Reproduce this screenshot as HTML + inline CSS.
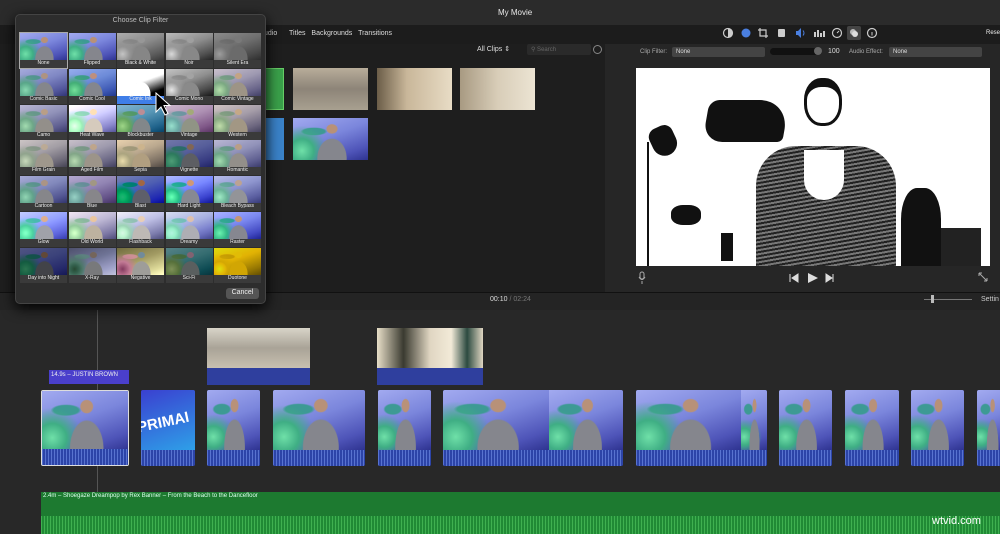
<!DOCTYPE html>
<html><head><meta charset="utf-8"><style>
*{box-sizing:border-box;margin:0;padding:0}
body{width:1000px;height:534px;background:#1f1f1f;position:relative;overflow:hidden;font-family:"Liberation Sans",sans-serif;color:#ddd;font-size:7px}
.a{position:absolute}
.t{position:absolute;background:
radial-gradient(ellipse 8% 12% at 52% 26%,#b89178 85%,transparent 100%),
radial-gradient(ellipse 20% 48% at 52% 96%,#85868d 95%,transparent 100%),
radial-gradient(circle at 12% 78%,#6fe0a8 0,#3fae84 16%,transparent 34%),
radial-gradient(ellipse 18% 10% at 28% 32%,#3d9a94 80%,transparent 100%),
linear-gradient(160deg,#a2aaf0,#7b86dc 45%,#4e54b8 80%,#2e3390);}
.lb{position:absolute;font-size:5px;color:#eee;text-align:center;background:#3a3a3a}
.clip{position:absolute;top:390px;height:76px;border-radius:2px;overflow:hidden;background:#2f3f9e}
.clip .t{left:0;right:0;top:0;height:60px}
.clip .w{position:absolute;left:0;right:0;bottom:0;height:16px;background:repeating-linear-gradient(90deg,#5873d0 0 1px,#2c44a8 1px 3px)}
</style></head><body>
<div class="a" style="left:0;top:0;width:1000px;height:25px;background:#2b2b2b"></div>
<div class="a" style="left:498px;top:8px;font-size:8px;color:#e8e8e8">My Movie</div>
<div class="a" style="left:0;top:25px;width:1000px;height:19px;background:#1c1c1c"></div>
<div class="a" style="left:264px;top:30px;font-size:7px;color:#ddd;word-spacing:4px">udio&nbsp; Titles Backgrounds Transitions</div>
<div class="a" style="left:0;top:44px;width:605px;height:248px;background:#1e1e1e"></div>
<div class="a" style="left:477px;top:45px;font-size:7px;color:#ddd">All Clips ⇕</div>
<div class="a" style="left:527px;top:44px;width:64px;height:11px;background:#2a2a2a;border-radius:2px;font-size:6px;color:#666;padding:2px 4px">⚲ Search</div>
<div class="a" style="left:593px;top:45px;width:9px;height:9px;border:1px solid #888;border-radius:50%"></div>
<div class="a" style="left:265px;top:68px;width:19px;height:42px;background:#3aa04a;border:1px solid #6c6"></div>
<div class="a" style="left:293px;top:68px;width:75px;height:42px;background:linear-gradient(#b8ad9a,#8d8478 50%,#a8a090)"></div>
<div class="a" style="left:377px;top:68px;width:75px;height:42px;background:linear-gradient(90deg,#6b5d48,#c9b79a 40%,#e8dcc5)"></div>
<div class="a" style="left:460px;top:68px;width:75px;height:42px;background:linear-gradient(90deg,#a89a82,#d8cdb8 50%,#ece4d3)"></div>
<div class="a" style="left:265px;top:118px;width:19px;height:42px;background:#3a82c8"></div>
<div class="t" style="left:293px;top:118px;width:75px;height:42px"></div>
<div class="a" style="left:605px;top:44px;width:395px;height:248px;background:#262626"></div>
<svg class="a" style="left:720px;top:26px" width="160" height="14" viewBox="0 0 160 14">
<circle cx="8" cy="7" r="4.5" fill="none" stroke="#ccc" stroke-width="1.2"/><path d="M8 2.5a4.5 4.5 0 0 1 0 9z" fill="#ccc"/>
<circle cx="26" cy="7" r="4.5" fill="#4a7fe0"/>
<path d="M40 2v8h8M38 4h8v8" fill="none" stroke="#ccc" stroke-width="1.2"/>
<rect x="58" y="3" width="7" height="8" fill="#ccc" rx="1"/>
<path d="M76 5h2l3-3v10l-3-3h-2z" fill="#4a7fe0"/><path d="M83 4.5q2 2.5 0 5" stroke="#4a7fe0" fill="none"/>
<path d="M94 11V6h2v5zM97 11V4h2v7zM100 11V7h2v4zM103 11V5h2v6z" fill="#ccc"/>
<circle cx="117" cy="7" r="4.5" fill="none" stroke="#ccc" stroke-width="1.2"/><path d="M117 7l2-2" stroke="#ccc"/>
<rect x="127" y="0" width="14" height="14" fill="#444" rx="2"/><circle cx="133" cy="6" r="3" fill="#bbb"/><circle cx="135" cy="8" r="3" fill="#ddd"/>
<circle cx="152" cy="7" r="4.5" fill="none" stroke="#ccc" stroke-width="1.2"/><path d="M152 6v3.5" stroke="#ccc"/>
</svg>
<div class="a" style="left:986px;top:30px;font-size:6px;color:#eee">Rese</div>
<div class="a" style="left:640px;top:49px;font-size:6px;color:#aaa">Clip Filter:</div>
<div class="a" style="left:672px;top:47px;width:93px;height:10px;background:#444;border-radius:2px;font-size:6px;color:#ddd;padding:2px 4px">None</div>
<div class="a" style="left:770px;top:48px;width:52px;height:7px;background:#111;border-radius:4px"></div>
<div class="a" style="left:814px;top:47px;width:8px;height:8px;background:#666;border-radius:50%"></div>
<div class="a" style="left:828px;top:48px;font-size:7px;color:#ddd">100</div>
<div class="a" style="left:849px;top:49px;font-size:6px;color:#aaa">Audio Effect:</div>
<div class="a" style="left:889px;top:47px;width:93px;height:10px;background:#444;border-radius:2px;font-size:6px;color:#ddd;padding:2px 4px">None</div>
<div class="a" style="left:636px;top:68px;width:354px;height:198px;background:#fff;overflow:hidden">
 <div class="a" style="left:168px;top:10px;width:38px;height:48px;border-radius:45%;border:3px solid #111;border-top-width:9px"></div>
 <div class="a" style="left:120px;top:78px;width:140px;height:125px;background:repeating-linear-gradient(170deg,#222 0 2px,#777 2px 4px);border-radius:40px 40px 0 0"></div>
 <div class="a" style="left:168px;top:82px;width:40px;height:50px;background:#fff;border-radius:0 0 20px 20px"></div>
 <div class="a" style="left:70px;top:32px;width:80px;height:42px;background:#111;transform:skew(-10deg);border-radius:10px 30px 5px 20px"></div>
 <div class="a" style="left:15px;top:58px;width:25px;height:30px;background:#111;border-radius:10px 10px 14px 14px;transform:rotate(-25deg)"></div>
 <div class="a" style="left:11px;top:74px;width:2px;height:124px;background:#111"></div>
 <div class="a" style="left:35px;top:137px;width:30px;height:20px;background:#111;border-radius:40%"></div>
 <div class="a" style="left:85px;top:165px;width:12px;height:28px;background:#111"></div>
 <div class="a" style="left:265px;top:120px;width:40px;height:78px;background:#111;border-radius:40% 40% 0 0"></div>
 <div class="a" style="left:305px;top:160px;width:40px;height:38px;background:#222"></div>
</div>
<svg class="a" style="left:636px;top:270px" width="354" height="16" viewBox="0 0 354 16">
<rect x="4" y="2" width="4" height="7" rx="2" fill="none" stroke="#aaa"/><path d="M3 7q3 5 6 0M6 11v3" stroke="#aaa" fill="none"/>
<path d="M154 4v8M162 4l-6 4 6 4z" fill="#ddd" stroke="#ddd"/>
<path d="M172 3l10 5-10 5z" fill="#ddd"/>
<path d="M190 4l6 4-6 4zM197 4v8" fill="#ddd" stroke="#ddd"/>
<path d="M343 3l8 8M343 3v3M343 3h3M351 11v-3M351 11h-3" stroke="#aaa" fill="none"/>
</svg>
<div class="a" style="left:0;top:292px;width:1000px;height:18px;background:#242424;border-top:1px solid #111"></div>
<div class="a" style="left:490px;top:296px;font-size:7px;color:#ddd">00:10 <span style="color:#777">/ 02:24</span></div>
<div class="a" style="left:924px;top:299px;width:48px;height:1px;background:#777"></div>
<div class="a" style="left:931px;top:295px;width:3px;height:8px;background:#bbb"></div>
<div class="a" style="left:981px;top:296px;font-size:7px;color:#ccc">Settin</div>
<div class="a" style="left:0;top:310px;width:1000px;height:224px;background:#282828"></div>
<div class="a" style="left:97px;top:310px;width:1px;height:224px;background:#555"></div>
<div class="a" style="left:207px;top:328px;width:103px;height:57px;background:#2f3f9e"><div class="a" style="left:0;top:0;width:103px;height:40px;background:linear-gradient(#d8d4c8,#a9a397 50%,#c8c0b0)"></div></div>
<div class="a" style="left:377px;top:328px;width:106px;height:57px;background:#2f3f9e"><div class="a" style="left:0;top:0;width:106px;height:40px;background:linear-gradient(90deg,#e8dfc8,#3a3a30 25%,#e0d6c2 50%,#f2ead8 70%,#2c4a40 85%,#e0d6c2)"></div></div>
<div class="a" style="left:49px;top:370px;width:80px;height:14px;background:#4a3fcc;font-size:6px;color:#eee;padding:2px 2px">14.9s – JUSTIN BROWN</div>
<div class="clip" style="left:41px;width:88px;border:1px solid #ddd"><div class="t"></div><div class="w"></div></div>
<div class="clip" style="left:141px;width:54px"><div class="a" style="left:0;top:0;width:54px;height:60px;background:linear-gradient(160deg,#3a40d0,#2ea0e8)"></div><div class="a" style="left:-4px;top:24px;font-size:15px;font-weight:bold;color:#fff;transform:rotate(-12deg)">PRIMAI</div><div class="w"></div></div>
<div class="clip" style="left:207px;width:53px"><div class="t"></div><div class="w"></div></div>
<div class="clip" style="left:273px;width:92px"><div class="t"></div><div class="w"></div></div>
<div class="clip" style="left:378px;width:53px"><div class="t"></div><div class="w"></div></div>
<div class="clip" style="left:443px;width:180px"><div class="t" style="width:106px;right:auto"></div><div class="t" style="left:106px"></div><div class="w"></div></div>
<div class="clip" style="left:636px;width:131px"><div class="t" style="width:105px;right:auto"></div><div class="t" style="left:105px"></div><div class="w"></div></div>
<div class="clip" style="left:779px;width:53px"><div class="t"></div><div class="w"></div></div>
<div class="clip" style="left:845px;width:54px"><div class="t"></div><div class="w"></div></div>
<div class="clip" style="left:911px;width:53px"><div class="t"></div><div class="w"></div></div>
<div class="clip" style="left:977px;width:30px"><div class="t"></div><div class="w"></div></div>
<div class="a" style="left:41px;top:492px;width:959px;height:42px;background:#1d7a30"></div>
<div class="a" style="left:41px;top:516px;width:959px;height:18px;background:repeating-linear-gradient(90deg,#3fb050 0 1px,#208a35 1px 3px)"></div>
<div class="a" style="left:43px;top:493px;font-size:6px;color:#dfe">2.4m – Shoegaze Dreampop by Rex Banner – From the Beach to the Dancefloor</div>
<div class="a" style="left:932px;top:515px;font-size:11px;color:#fff">wtvid.com</div>
<div class="a" style="left:15px;top:14px;width:251px;height:290px;background:#2d2d2d;border:1px solid #444;border-radius:5px;box-shadow:0 4px 14px #000"></div>
<div class="a" style="left:15px;top:17px;width:251px;text-align:center;font-size:7px;color:#bbb">Choose Clip Filter</div>
<div id="g"></div>
<div class="a" style="left:226px;top:288px;width:33px;height:11px;background:#555;border-radius:3px;font-size:7px;color:#eee;text-align:center;padding-top:1px">Cancel</div>
<svg class="a" style="left:155px;top:92px" width="16" height="24" viewBox="0 0 16 24"><path d="M1 1v19l5-5 4 8 3-1.5-4-8h6z" fill="#000" stroke="#fff" stroke-width="1"/></svg>
<script>
var n=["None","Flipped","Black & White","Noir","Silent Era","Comic Basic","Comic Cool","Comic Ink","Comic Mono","Comic Vintage","Camo","Heat Wave","Blockbuster","Vintage","Western","Film Grain","Aged Film","Sepia","Vignette","Romantic","Cartoon","Blue","Blast","Hard Light","Bleach Bypass","Glow","Old World","Flashback","Dreamy","Raster","Day into Night","X-Ray","Negative","Sci-Fi","Duotone"];
var f=["","","grayscale(1)","grayscale(1) contrast(1.3)","grayscale(1) brightness(.8)","saturate(.7)","hue-rotate(-10deg)","grayscale(1) contrast(3) brightness(1.8)","grayscale(1) contrast(1.5)","sepia(.5)","sepia(.3) saturate(.8)","sepia(.4) brightness(1.4)","hue-rotate(-40deg) saturate(.8)","sepia(.4) hue-rotate(40deg)","sepia(.6)","sepia(.6) saturate(.6)","sepia(.5) saturate(.8)","sepia(.9)","brightness(.7)","sepia(.3) saturate(.8)","saturate(.6)","hue-rotate(20deg) saturate(.5)","saturate(1.5) contrast(1.4) brightness(.7)","contrast(1.4)","saturate(.6) brightness(1.1)","brightness(1.2)","sepia(.5) brightness(1.2)","sepia(.3) brightness(1.3) saturate(.6)","brightness(1.3) saturate(.6)","contrast(1.2)","brightness(.5) saturate(1.3)","invert(1) hue-rotate(180deg) saturate(.4)","invert(1) grayscale(.5) brightness(1.3)","hue-rotate(-60deg) saturate(.8) brightness(.7)","sepia(1) saturate(4) hue-rotate(10deg)"];
var h="";for(var i=0;i<35;i++){var c=i%5,r=(i/5)|0,x=20+c*48.5,y=33+r*35.8;
h+='<div class="t" style="left:'+x+'px;top:'+y+'px;width:47px;height:27px;filter:'+f[i]+'"></div><div class="lb" style="left:'+x+'px;top:'+(y+27)+'px;width:47px;height:8px;'+(i==7?'background:#3f7ee8':'')+'">'+n[i]+'</div>';}
h+='<div class="a" style="left:19px;top:32px;width:49px;height:37px;border:1px solid #aaa"></div>';
document.getElementById("g").innerHTML=h;
</script>
</body></html>
